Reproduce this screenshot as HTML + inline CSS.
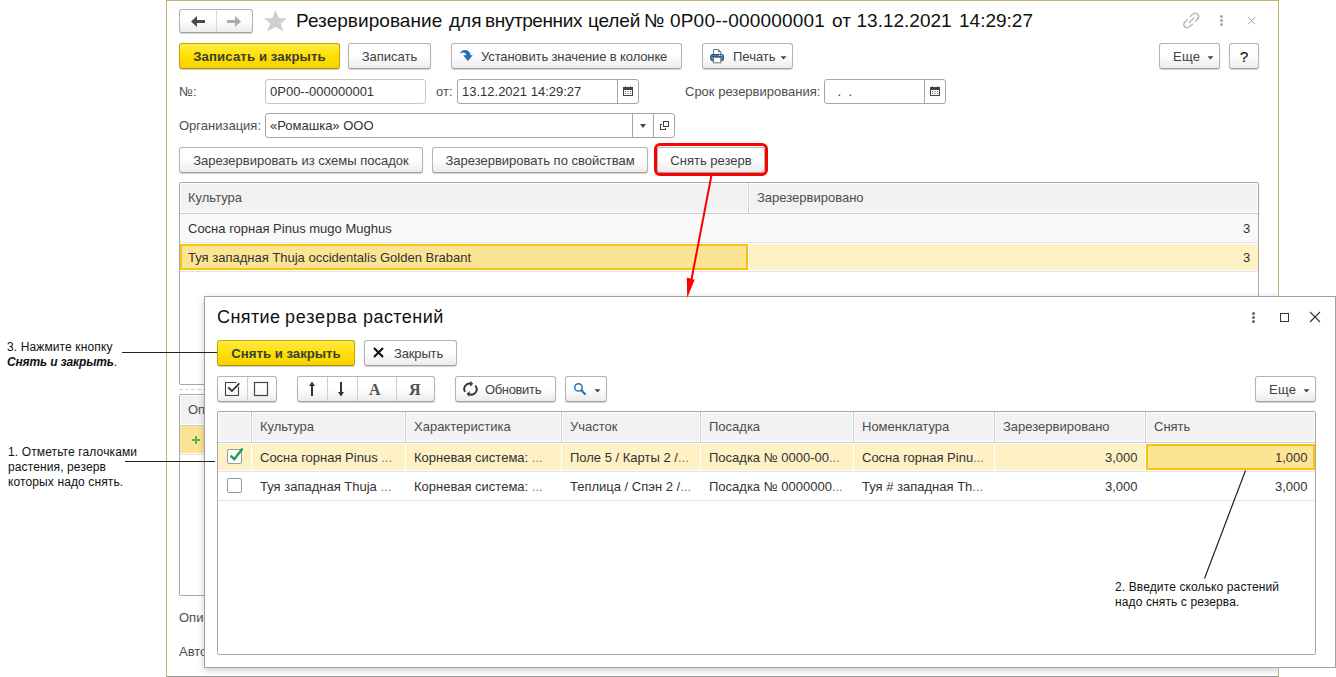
<!DOCTYPE html>
<html><head><meta charset="utf-8">
<style>
*{box-sizing:border-box;margin:0;padding:0}
html,body{width:1336px;height:677px;overflow:hidden;background:#fff;font-family:"Liberation Sans",sans-serif;font-size:13px;color:#333}
.a{position:absolute}
.t{position:absolute;white-space:nowrap;line-height:15px}
.btn{position:absolute;height:26px;border:1px solid #b3b3b3;border-bottom-color:#a0a0a0;border-radius:3px;background:linear-gradient(#fff 0%,#fff 45%,#ececec 100%);box-shadow:0 1px 1px rgba(0,0,0,.18);color:#404040;line-height:25px;white-space:nowrap;text-align:center}
.ybtn{position:absolute;height:26px;border:1px solid #c4a400;border-bottom-color:#ad9200;border-radius:3px;background:linear-gradient(#ffea4a 0%,#ffe100 50%,#f6d200 100%);box-shadow:0 1px 1px rgba(0,0,0,.2);color:#3c3c3c;font-weight:bold;font-size:13.2px;line-height:25px;white-space:nowrap;text-align:center}
.inp{position:absolute;height:25px;border:1px solid #a6a6a6;border-radius:3px;background:#fff;color:#333;line-height:24px;padding-left:4px;white-space:nowrap}
.lbl{position:absolute;color:#4d4d4d;white-space:nowrap;line-height:15px}
.vd{position:absolute;top:0;bottom:0;width:1px;background:#a6a6a6}
.hdr{position:absolute;background:#f2f2f2}
</style></head><body>

<!-- ===== OUTER WINDOW ===== -->
<div class="a" style="left:166px;top:0;width:1113px;height:677px;border:1px solid #c2b46a;border-bottom-color:#9a9a9a;background:#fff"></div>

<!-- nav buttons -->
<div class="btn" style="left:179px;top:9px;width:74px;height:24px"></div>
<div class="a" style="left:216px;top:10px;width:1px;height:22px;background:#d8d8d8"></div>
<svg class="a" style="left:185px;top:12px" width="25" height="18" viewBox="0 0 25 18"><path d="M6 9.5 L12 4 L12 8 L20 8 L20 11 L12 11 L12 15 Z" fill="#4a4a4a"/></svg>
<svg class="a" style="left:222px;top:12px" width="25" height="18" viewBox="0 0 25 18"><path d="M19 9.5 L13 4 L13 8 L5 8 L5 11 L13 11 L13 15 Z" fill="#aaaaaa"/></svg>
<!-- star -->
<svg class="a" style="left:260px;top:8px" width="32" height="26" viewBox="0 0 32 26"><path d="M15.4 2.1 L18.8 10 L26.9 10.4 L20.7 15.4 L23.4 23.4 L15.4 19 L7.1 23.4 L10.2 15.4 L4 10.4 L12.3 10 Z" fill="#cfcfcf"/></svg>
<div class="t" style="left:296px;top:10px;font-size:19px;line-height:22px;color:#111;letter-spacing:0.05px">Резервирование</div>
<div class="t" style="left:449px;top:10px;font-size:19px;line-height:22px;color:#111;letter-spacing:0px">для</div>
<div class="t" style="left:485px;top:10px;font-size:19px;line-height:22px;color:#111;letter-spacing:-0.4px">внутренних</div>
<div class="t" style="left:588px;top:10px;font-size:19px;line-height:22px;color:#111;letter-spacing:-0.15px">целей</div>
<div class="t" style="left:644px;top:10px;font-size:19px;line-height:22px;color:#111;letter-spacing:0px">№</div>
<div class="t" style="left:670px;top:10px;font-size:19px;line-height:22px;color:#111;letter-spacing:0.19px">0Р00--000000001</div>
<div class="t" style="left:832px;top:10px;font-size:19px;line-height:22px;color:#111;letter-spacing:0px">от</div>
<div class="t" style="left:856.5px;top:10px;font-size:19px;line-height:22px;color:#111;letter-spacing:0px">13.12.2021</div>
<div class="t" style="left:959px;top:10px;font-size:19px;line-height:22px;color:#111;letter-spacing:0px">14:29:27</div>
<!-- link/dots/close -->
<svg class="a" style="left:1180px;top:10px" width="24" height="22" viewBox="0 0 24 22"><g fill="none" stroke="#b0b0b0" stroke-width="1.3" stroke-linecap="round"><path d="M10.4 6.5 L13 4 Q15.5 2 17.8 4.4 Q19.8 6.8 17.5 9.2 L15.3 11.4"/><path d="M7.6 9.4 L5 12 Q2.6 14.6 4.8 16.8 Q7.2 19 9.6 16.6 L12.5 14.3"/><path d="M9.3 12.5 L13.8 8" stroke-dasharray="1.2 0.9"/></g></svg>
<div class="a" style="left:1220px;top:15px;width:3px;height:3px;border-radius:2px;background:#a8a8a8"></div>
<div class="a" style="left:1220px;top:19px;width:3px;height:3px;border-radius:2px;background:#a8a8a8"></div>
<div class="a" style="left:1220px;top:23px;width:3px;height:3px;border-radius:2px;background:#a8a8a8"></div>
<svg class="a" style="left:1247px;top:16px" width="10" height="10" viewBox="0 0 10 10"><path d="M1.2 1.2 L8.2 8.2 M8.2 1.2 L1.2 8.2" stroke="#a8a8a8" stroke-width="1"/></svg>

<!-- row 2 buttons -->
<div class="ybtn" style="left:179px;top:43px;width:161px;letter-spacing:0.1px">Записать и закрыть</div>
<div class="btn" style="left:348px;top:43px;width:83px">Записать</div>
<div class="btn" style="left:451px;top:43px;width:231px;text-align:left;padding-left:29px;letter-spacing:-0.12px">Установить значение в колонке</div>
<svg class="a" style="left:459px;top:49px" width="15" height="13" viewBox="0 0 15 13"><path d="M0.9 4.8 Q2.5 0.6 6.5 1.1 Q11 1.8 11.6 6.2 L13.7 6.2 L8.9 12 L4.2 6.2 L7.4 6.2 Q6.8 3.8 4.5 3.6 Q2.6 3.6 0.9 4.8 Z" fill="#1f6fb2"/></svg>
<div class="btn" style="left:702px;top:43px;width:91px;text-align:left;padding-left:30px">Печать</div>
<svg class="a" style="left:705px;top:46px" width="25" height="20" viewBox="0 0 25 20"><path d="M8.5 8.5 V3.5 H13.5 L16 6 V8.5" fill="#fff" stroke="#607590" stroke-width="1"/><path d="M13.5 3.5 V6 H16" fill="#8fa0b5" stroke="#607590" stroke-width="0.8"/><rect x="5.8" y="8.6" width="12.6" height="6" rx="1.8" fill="#6690c0" stroke="#234f80" stroke-width="1.2"/><path d="M7 10.4 H17.2" stroke="#2c527a" stroke-width="1.1"/><circle cx="14.5" cy="9.6" r="0.6" fill="#fff"/><circle cx="16.4" cy="9.6" r="0.6" fill="#fff"/><rect x="8.5" y="11.3" width="7.3" height="5.5" fill="#fff" stroke="#607590" stroke-width="1"/></svg>
<svg class="a" style="left:780px;top:56px" width="7" height="4" viewBox="0 0 7 4"><path d="M0.5 0.2 H6.5 L3.5 3.6 Z" fill="#444"/></svg>
<div class="btn" style="left:1159px;top:43px;width:61px;text-align:left;padding-left:13px;letter-spacing:0.3px">Еще</div>
<svg class="a" style="left:1207px;top:56px" width="7" height="4" viewBox="0 0 7 4"><path d="M0.5 0.2 H6.5 L3.5 3.6 Z" fill="#444"/></svg>
<div class="btn" style="left:1229px;top:43px;width:30px;color:#111;font-size:15.5px;line-height:25px;-webkit-text-stroke:0.1px #111">?</div>

<!-- row 3 -->
<div class="lbl" style="left:179px;top:84px">№:</div>
<div class="inp" style="left:265px;top:79px;width:161px;border-color:#c6c6c6">0Р00--000000001</div>
<div class="lbl" style="left:436px;top:84px">от:</div>
<div class="inp" style="left:457px;top:79px;width:182px">13.12.2021 14:29:27</div>
<div class="a" style="left:617px;top:80px;width:1px;height:23px;background:#a6a6a6"></div>
<svg class="a" style="left:623px;top:86px" width="10" height="10" viewBox="0 0 10 10"><rect x="0.5" y="1.5" width="9" height="8" fill="#fff" stroke="#444"/><rect x="0" y="1" width="10" height="3" fill="#444"/><rect x="2" y="0" width="1" height="1" fill="#888"/><rect x="7" y="0" width="1" height="1" fill="#888"/><g fill="#555"><rect x="2" y="5" width="1" height="1"/><rect x="4.5" y="5" width="1" height="1"/><rect x="7" y="5" width="1" height="1"/><rect x="2" y="7" width="1" height="1"/><rect x="4.5" y="7" width="1" height="1"/><rect x="7" y="7" width="1" height="1"/></g></svg>
<div class="lbl" style="left:685px;top:84px">Срок резервирования:</div>
<div class="inp" style="left:824px;top:79px;width:122px;padding-left:9px">&nbsp;.&nbsp;&nbsp;.</div>
<div class="a" style="left:924px;top:80px;width:1px;height:23px;background:#a6a6a6"></div>
<svg class="a" style="left:930px;top:86px" width="10" height="10" viewBox="0 0 10 10"><rect x="0.5" y="1.5" width="9" height="8" fill="#fff" stroke="#444"/><rect x="0" y="1" width="10" height="3" fill="#444"/><rect x="2" y="0" width="1" height="1" fill="#888"/><rect x="7" y="0" width="1" height="1" fill="#888"/><g fill="#555"><rect x="2" y="5" width="1" height="1"/><rect x="4.5" y="5" width="1" height="1"/><rect x="7" y="5" width="1" height="1"/><rect x="2" y="7" width="1" height="1"/><rect x="4.5" y="7" width="1" height="1"/><rect x="7" y="7" width="1" height="1"/></g></svg>

<!-- row 4 -->
<div class="lbl" style="left:179px;top:118px">Организация:</div>
<div class="inp" style="left:265px;top:113px;width:410px">«Ромашка» ООО</div>
<div class="a" style="left:632px;top:114px;width:1px;height:23px;background:#a6a6a6"></div>
<div class="a" style="left:653px;top:114px;width:1px;height:23px;background:#a6a6a6"></div>
<svg class="a" style="left:640px;top:124px" width="6" height="4" viewBox="0 0 6 4"><path d="M0 0 H6 L3 4 Z" fill="#444"/></svg>
<svg class="a" style="left:660px;top:121px" width="10" height="10" viewBox="0 0 10 10"><rect x="3.5" y="0.5" width="5" height="5" fill="none" stroke="#444"/><g fill="#444"><rect x="0" y="3" width="1" height="6"/><rect x="0" y="8" width="6" height="1"/><rect x="1" y="3" width="1" height="1"/><rect x="5" y="7" width="1" height="1"/></g></svg>

<!-- row 5 -->
<div class="btn" style="left:179px;top:147px;width:244px">Зарезервировать из схемы посадок</div>
<div class="btn" style="left:432px;top:147px;width:216px">Зарезервировать по свойствам</div>
<div class="btn" style="left:657px;top:147px;width:108px">Снять резерв</div>
<div class="a" style="left:654px;top:143px;width:114px;height:33px;border:3px solid #ff0000;border-radius:6px"></div>

<!-- ===== TABLE 1 ===== -->
<div class="a" style="left:179px;top:182px;width:1080px;height:203px;border:1px solid #a8a8a8;border-radius:2px;background:#fff"></div>
<div class="hdr" style="left:181px;top:184px;width:566px;height:28px"></div>
<div class="hdr" style="left:750px;top:184px;width:507px;height:28px"></div>
<div class="a" style="left:180px;top:213px;width:1078px;height:1px;background:#cccccc"></div>
<div class="a" style="left:748px;top:183px;width:1px;height:30px;background:#cccccc"></div>
<div class="t" style="left:188px;top:190px;color:#4d4d4d">Культура</div>
<div class="t" style="left:757px;top:190px;color:#4d4d4d">Зарезервировано</div>
<div class="a" style="left:180px;top:214px;width:1078px;height:28px;background:#f9f9f9"></div>
<div class="a" style="left:180px;top:242px;width:1078px;height:1px;background:#e2e2e2"></div>
<div class="t" style="left:188px;top:221px">Сосна горная Pinus mugo Mughus</div>
<div class="t" style="left:1243px;top:221px">3</div>
<div class="a" style="left:749px;top:244px;width:509px;height:26px;background:#fdf1c5"></div>
<div class="a" style="left:180px;top:244px;width:568px;height:26px;background:#fde494;border:2px solid #f6c40c"></div>
<div class="a" style="left:180px;top:271px;width:1078px;height:1px;background:#e2e2e2"></div>
<div class="t" style="left:188px;top:250px">Туя западная Thuja occidentalis Golden Brabant</div>
<div class="t" style="left:1243px;top:250px">3</div>

<!-- lower section -->
<div class="a" style="left:179px;top:389px;width:300px;height:1px;background:repeating-linear-gradient(to right,#d6d6d6 0,#d6d6d6 4px,transparent 4px,transparent 6px)"></div>
<div class="a" style="left:179px;top:394px;width:300px;height:202px;border:1px solid #a8a8a8;border-radius:2px;background:#fff"></div>
<div class="hdr" style="left:181px;top:396px;width:297px;height:28px"></div>
<div class="a" style="left:180px;top:425px;width:298px;height:1px;background:#cccccc"></div>
<div class="t" style="left:188px;top:402px;color:#4d4d4d">Описание</div>
<div class="a" style="left:180px;top:426px;width:298px;height:27px;background:#fbe396"></div>
<div class="a" style="left:180px;top:454px;width:298px;height:1px;background:#e2e2e2"></div>
<svg class="a" style="left:192px;top:436px" width="8" height="8" viewBox="0 0 8 8"><path d="M3 0 H5 V3 H8 V5 H5 V8 H3 V5 H0 V3 H3 Z" fill="#5db536"/></svg>
<div class="lbl" style="left:179px;top:610px">Описание:</div>
<div class="lbl" style="left:179px;top:644px">Автор:</div>

<!-- ===== DIALOG ===== -->
<div class="a" style="left:167px;top:1px;width:1111px;height:675px;overflow:hidden"><div class="a" style="left:37px;top:295px;width:1132px;height:372px;box-shadow:0 2px 7px rgba(0,0,0,.2)"></div></div>
<div class="a" style="left:204px;top:296px;width:1132px;height:372px;border:1px solid #a0a0a0;background:#fff"></div>
<div class="t" style="left:217px;top:307px;font-size:18px;line-height:21px;color:#111;letter-spacing:0.4px">Снятие</div>
<div class="t" style="left:285px;top:307px;font-size:18px;line-height:21px;color:#111;letter-spacing:0.8px">резерва</div>
<div class="t" style="left:363px;top:307px;font-size:18px;line-height:21px;color:#111;letter-spacing:0.45px">растений</div>
<div class="a" style="left:1252px;top:312px;width:3px;height:3px;border-radius:2px;background:#666"></div>
<div class="a" style="left:1252px;top:316px;width:3px;height:3px;border-radius:2px;background:#666"></div>
<div class="a" style="left:1252px;top:320px;width:3px;height:3px;border-radius:2px;background:#666"></div>
<div class="a" style="left:1280px;top:313px;width:9px;height:9px;border:1px solid #333"></div>
<svg class="a" style="left:1309px;top:311px" width="12" height="12" viewBox="0 0 12 12"><path d="M1 1 L11 11 M11 1 L1 11" stroke="#333" stroke-width="1.1"/></svg>

<div class="ybtn" style="left:217px;top:340px;width:138px">Снять и закрыть</div>
<div class="btn" style="left:364px;top:340px;width:93px;text-align:left;padding-left:29px;letter-spacing:-0.15px">Закрыть</div>
<svg class="a" style="left:372px;top:346px" width="13" height="13" viewBox="0 0 13 13"><path d="M2 2 L11 11 M11 2 L2 11" stroke="#111" stroke-width="2.2"/></svg>

<!-- toolbar -->
<div class="btn" style="left:217px;top:376px;width:60px"></div>
<div class="a" style="left:247px;top:377px;width:1px;height:24px;background:#cfcfcf"></div>
<svg class="a" style="left:224px;top:381px" width="17" height="16" viewBox="0 0 17 16"><path d="M12.5 1.5 H1.5 V14.5 H14.5 V5.5" fill="none" stroke="#444" stroke-width="1.1"/><path d="M4.2 6.3 L7.9 10 L15.3 2.3" fill="none" stroke="#333" stroke-width="1.8"/></svg>
<svg class="a" style="left:253px;top:381px" width="16" height="16" viewBox="0 0 16 16"><rect x="1.5" y="1.5" width="13" height="13" fill="none" stroke="#444" stroke-width="1.2"/></svg>
<div class="btn" style="left:297px;top:376px;width:138px"></div>
<div class="a" style="left:327px;top:377px;width:1px;height:24px;background:#cfcfcf"></div>
<div class="a" style="left:357px;top:377px;width:1px;height:24px;background:#cfcfcf"></div>
<div class="a" style="left:396px;top:377px;width:1px;height:24px;background:#cfcfcf"></div>
<svg class="a" style="left:308px;top:381px" width="8" height="16" viewBox="0 0 8 16"><path d="M4 0.5 L7 5 H5 V15 H3 V5 H1 Z" fill="#333"/></svg>
<svg class="a" style="left:337px;top:381px" width="8" height="16" viewBox="0 0 8 16"><path d="M4 15.5 L7 11 H5 V1 H3 V11 H1 Z" fill="#333"/></svg>
<div class="t" style="left:369px;top:381px;font-family:'Liberation Serif',serif;font-weight:bold;font-size:16px;line-height:17px;color:#505050">A</div>
<div class="t" style="left:409px;top:381px;font-family:'Liberation Serif',serif;font-weight:bold;font-size:16px;line-height:17px;color:#505050">Я</div>
<div class="btn" style="left:455px;top:376px;width:101px;text-align:left;padding-left:29px;letter-spacing:-0.35px">Обновить</div>
<svg class="a" style="left:463px;top:381px" width="15" height="17" viewBox="0 0 15 17"><g fill="none" stroke="#333" stroke-width="1.9"><path d="M2.1 10.8 A5.3 5.3 0 0 1 7.6 2.7"/><path d="M12.2 4.6 A5.3 5.3 0 0 1 6.4 13.2"/></g><path d="M7.2 0 L10.2 2.8 L7.2 5.8 Z" fill="#333"/><path d="M6.6 10 L3.6 12.9 L6.6 15.8 Z" fill="#333"/></svg>
<div class="btn" style="left:565px;top:376px;width:42px"></div>
<svg class="a" style="left:573px;top:383px" width="14" height="13" viewBox="0 0 14 13"><circle cx="5.5" cy="4.4" r="3.7" fill="none" stroke="#2c74b3" stroke-width="1.5"/><path d="M8.4 7.4 L12 11" stroke="#2c74b3" stroke-width="2.2" stroke-linecap="round"/></svg>
<svg class="a" style="left:594px;top:389px" width="7" height="4" viewBox="0 0 7 4"><path d="M0.5 0.2 H6.5 L3.5 3.6 Z" fill="#444"/></svg>
<div class="btn" style="left:1255px;top:376px;width:61px;text-align:left;padding-left:13px;letter-spacing:0.3px">Еще</div>
<svg class="a" style="left:1303px;top:389px" width="7" height="4" viewBox="0 0 7 4"><path d="M0.5 0.2 H6.5 L3.5 3.6 Z" fill="#444"/></svg>

<!-- dialog table -->
<div class="a" style="left:217px;top:411px;width:1099px;height:244px;border:1px solid #a8a8a8;border-radius:2px;background:#fff"></div>
<div class="hdr" style="left:219px;top:413px;width:31px;height:28px"></div>
<div class="hdr" style="left:253px;top:413px;width:151px;height:28px"></div>
<div class="hdr" style="left:407px;top:413px;width:153px;height:28px"></div>
<div class="hdr" style="left:563px;top:413px;width:136px;height:28px"></div>
<div class="hdr" style="left:702px;top:413px;width:150px;height:28px"></div>
<div class="hdr" style="left:855px;top:413px;width:138px;height:28px"></div>
<div class="hdr" style="left:996px;top:413px;width:148px;height:28px"></div>
<div class="hdr" style="left:1147px;top:413px;width:167px;height:28px"></div>
<div class="a" style="left:251px;top:412px;width:1px;height:30px;background:#cccccc"></div>
<div class="a" style="left:405px;top:412px;width:1px;height:30px;background:#cccccc"></div>
<div class="a" style="left:561px;top:412px;width:1px;height:30px;background:#cccccc"></div>
<div class="a" style="left:700px;top:412px;width:1px;height:30px;background:#cccccc"></div>
<div class="a" style="left:853px;top:412px;width:1px;height:30px;background:#cccccc"></div>
<div class="a" style="left:994px;top:412px;width:1px;height:30px;background:#cccccc"></div>
<div class="a" style="left:1145px;top:412px;width:1px;height:30px;background:#cccccc"></div>
<div class="a" style="left:218px;top:442px;width:1097px;height:1px;background:#cccccc"></div>
<div class="t" style="left:260px;top:419px;color:#4d4d4d">Культура</div>
<div class="t" style="left:414px;top:419px;color:#4d4d4d">Характеристика</div>
<div class="t" style="left:570px;top:419px;color:#4d4d4d">Участок</div>
<div class="t" style="left:709px;top:419px;color:#4d4d4d">Посадка</div>
<div class="t" style="left:862px;top:419px;color:#4d4d4d">Номенклатура</div>
<div class="t" style="left:1003px;top:419px;color:#4d4d4d">Зарезервировано</div>
<div class="t" style="left:1154px;top:419px;color:#4d4d4d">Снять</div>
<div class="a" style="left:218px;top:444px;width:33px;height:26px;background:#fdf1c5"></div>
<div class="a" style="left:252px;top:444px;width:153px;height:26px;background:#fdf1c5"></div>
<div class="a" style="left:406px;top:444px;width:155px;height:26px;background:#fdf1c5"></div>
<div class="a" style="left:562px;top:444px;width:138px;height:26px;background:#fdf1c5"></div>
<div class="a" style="left:701px;top:444px;width:152px;height:26px;background:#fdf1c5"></div>
<div class="a" style="left:854px;top:444px;width:140px;height:26px;background:#fdf1c5"></div>
<div class="a" style="left:995px;top:444px;width:150px;height:26px;background:#fdf1c5"></div>
<div class="a" style="left:1146px;top:444px;width:169px;height:26px;background:#fde494;border:2px solid #f6c40c"></div>
<div class="a" style="left:218px;top:471px;width:1097px;height:1px;background:#e2e2e2"></div>
<div class="a" style="left:218px;top:500px;width:1097px;height:1px;background:#e2e2e2"></div>
<div class="a" style="left:227px;top:449px;width:15px;height:15px;border:1px solid #9a9a9a;border-radius:2px;background:#fff"></div>
<svg class="a" style="left:227px;top:445px" width="17" height="16" viewBox="0 0 17 16"><path d="M3.6 10.6 L7.3 14.2 L15.5 3.6" fill="none" stroke="#17a04a" stroke-width="2.4"/></svg>
<div class="a" style="left:227px;top:478px;width:15px;height:15px;border:1px solid #9a9a9a;border-radius:2px;background:#fff"></div>
<div class="t" style="left:260px;top:450px">Сосна горная Pinus <span style="color:#777">...</span></div>
<div class="t" style="left:414px;top:450px">Корневая система: <span style="color:#777">...</span></div>
<div class="t" style="left:570px;top:450px">Поле 5 / Карты 2 /<span style="color:#777">...</span></div>
<div class="t" style="left:709px;top:450px">Посадка № 0000-00<span style="color:#777">...</span></div>
<div class="t" style="left:862px;top:450px">Сосна горная Pinu<span style="color:#777">...</span></div>
<div class="t" style="left:1105px;top:450px">3,000</div>
<div class="t" style="left:1275px;top:450px">1,000</div>
<div class="t" style="left:260px;top:479px">Туя западная Thuja <span style="color:#777">...</span></div>
<div class="t" style="left:414px;top:479px">Корневая система: <span style="color:#777">...</span></div>
<div class="t" style="left:570px;top:479px">Теплица / Спэн 2 /<span style="color:#777">...</span></div>
<div class="t" style="left:709px;top:479px">Посадка № 0000000<span style="color:#777">...</span></div>
<div class="t" style="left:862px;top:479px">Туя # западная Th<span style="color:#777">...</span></div>
<div class="t" style="left:1105px;top:479px">3,000</div>
<div class="t" style="left:1275px;top:479px">3,000</div>

<!-- ===== ANNOTATIONS ===== -->
<svg class="a" style="left:0;top:0" width="1336" height="677" viewBox="0 0 1336 677">
<path d="M122 352.5 H217" stroke="#222" stroke-width="1"/>
<path d="M125 461.5 H215" stroke="#222" stroke-width="1"/>
<path d="M1245.5 470.5 L1204.5 578.5" stroke="#222" stroke-width="1.2"/>
<path d="M711.5 175 L691 282" stroke="#ff0000" stroke-width="2"/>
<path d="M686.8 277.6 L694.6 279.8 L687.2 298 Z" fill="#ff0000"/>
</svg>
<div class="t" style="left:7px;top:340px;font-size:12px;color:#111;line-height:15px;letter-spacing:0.12px">3. Нажмите кнопку<br><b><i style="letter-spacing:-0.15px">Снять и закрыть</i></b>.</div>
<div class="t" style="left:8px;top:445px;font-size:12px;color:#111;line-height:15px;letter-spacing:0.12px">1. Отметьте галочками<br>растения, резерв<br>которых надо снять.</div>
<div class="t" style="left:1115px;top:580px;font-size:12px;color:#111;line-height:15px;letter-spacing:0.12px">2. Введите сколько растений<br>надо снять с резерва.</div>
</body></html>
